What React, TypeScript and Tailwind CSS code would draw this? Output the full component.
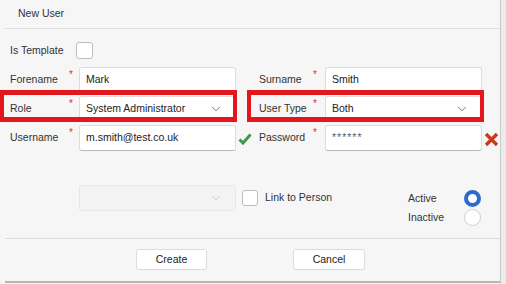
import { ChevronDown } from "lucide-react";

function Star({ mr }: { mr: string }) {
  return <span className={`ml-auto ${mr} mt-[3px] self-start text-[10px] leading-none text-[#e0303a]`}>*</span>;
}

function Field({ value, muted }: { value: string; muted?: boolean }) {
  return (
    <div className="flex h-full w-[157px] items-center rounded-[3px] border border-[#dcdcdc] border-b-[#b9b9b9] bg-white pl-[6px]">
      <span className={muted ? "text-[#5a6070] tracking-[1px]" : "text-[#222]"}>{value}</span>
    </div>
  );
}

function Select({ value, disabled }: { value?: string; disabled?: boolean }) {
  return (
    <div
      className={
        disabled
          ? "flex h-[26px] w-[157px] items-center rounded-[3px] border border-[#e6e6e6] bg-[#f3f3f3] pl-[6px] pr-[12px]"
          : "flex h-full w-[157px] items-center rounded-[3px] border border-[#dcdcdc] border-b-[#b9b9b9] bg-white pl-[6px] pr-[12px]"
      }
    >
      <span className="text-[#222]">{value}</span>
      <ChevronDown size={14} strokeWidth={1.4} className={disabled ? "ml-auto text-[#c8c8c8]" : "ml-auto text-[#555]"} />
    </div>
  );
}

function Check() {
  return (
    <svg width="14" height="12" viewBox="0 0 14 12">
      <polyline points="1.5,6.5 5,10 12.5,1.5" fill="none" stroke="#3d9a4b" strokeWidth="3" strokeLinejoin="miter" />
    </svg>
  );
}

function Cross() {
  return (
    <svg width="15" height="15" viewBox="0 0 15 15">
      <path d="M2 2 L13 13 M13 2 L2 13" stroke="#c63a22" strokeWidth="3.4" strokeLinecap="butt" />
    </svg>
  );
}

export default function App() {
  return (
    <div className="flex h-[284px] w-[506px] overflow-hidden bg-[#ebebeb] font-['Liberation_Sans',Arial,sans-serif] text-[10.5px] text-[#333]">
      <div className="relative flex w-[501px] flex-col border-r border-[#c9c9c9] bg-[#f6f6f6]">
        <div className="ml-[5px] flex h-[29px] items-center border-b border-[#dfdfdf] pl-[13px] text-[#333]">New User</div>

        <div className="flex h-[209px] flex-col pt-[13px]">
          <div className="flex h-[17px] items-center">
            <div className="w-[76px] pl-[10px]">Is Template</div>
            <div className="h-[17px] w-[17px] rounded-[3px] border border-[#bdbdbd] bg-white" />
          </div>

          <div className="mt-[8px] flex flex-col gap-[3px]">
            <div className="flex h-[26px]">
              <div className="flex w-[79px] items-center pl-[10px]">
                <span>Forename</span>
                <Star mr="mr-[6px]" />
              </div>
              <Field value="Mark" />
              <div className="w-[23px]" />
              <div className="flex w-[66px] items-center">
                <span>Surname</span>
                <Star mr="mr-[8px]" />
              </div>
              <Field value="Smith" />
            </div>

            <div className="flex h-[26px]">
              <div className="flex w-[79px] items-center pl-[10px]">
                <span>Role</span>
                <Star mr="mr-[6px]" />
              </div>
              <Select value="System Administrator" />
              <div className="w-[23px]" />
              <div className="flex w-[66px] items-center">
                <span>User Type</span>
                <Star mr="mr-[8px]" />
              </div>
              <Select value="Both" />
            </div>

            <div className="flex h-[26px]">
              <div className="flex w-[79px] items-center pl-[10px]">
                <span>Username</span>
                <Star mr="mr-[6px]" />
              </div>
              <Field value="m.smith@test.co.uk" />
              <div className="flex w-[23px] items-center pl-[2px] pt-[2px]">
                <Check />
              </div>
              <div className="flex w-[66px] items-center">
                <span>Password</span>
                <Star mr="mr-[8px]" />
              </div>
              <Field value="******" muted />
              <div className="flex items-center pl-[2px] pt-[3px]">
                <Cross />
              </div>
            </div>
          </div>

          <div className="mt-[34px] flex items-start">
            <div className="w-[79px]" />
            <Select disabled />
            <div className="ml-[6px] mt-[5px] h-[16px] w-[16px] rounded-[3px] border border-[#bdbdbd] bg-white" />
            <div className="ml-[7px] flex h-[26px] items-center">Link to Person</div>
            <div className="ml-auto mr-[19px] mt-[5px] flex flex-col gap-[2px]">
              <div className="flex h-[17px] items-center">
                <span className="w-[56px]">Active</span>
                <div className="h-[17px] w-[17px] rounded-full border-[4px] border-[#2b6bd0] bg-white" />
              </div>
              <div className="flex h-[17px] items-center">
                <span className="w-[56px]">Inactive</span>
                <div className="h-[17px] w-[17px] rounded-full border border-[#cfcfcf] bg-white" />
              </div>
            </div>
          </div>
        </div>

        <div className="ml-[5px] flex h-[45px] items-start gap-[86px] border-t border-b-2 border-t-[#dcdcdc] border-b-[#b5b5b5] pl-[131px] pt-[10px]">
          <button className="flex h-[21px] w-[71px] items-center justify-center rounded-[3px] border border-[#dcdcdc] bg-white text-[#222]">Create</button>
          <button className="flex h-[21px] w-[72px] items-center justify-center rounded-[3px] border border-[#dcdcdc] bg-white text-[#222]">Cancel</button>
        </div>

        <div className="pointer-events-none absolute left-0 top-[90px] h-[32px] w-[237px] border-[5px] border-x-[4px] border-[#e3161c]" />
        <div className="pointer-events-none absolute left-[247px] top-[90px] h-[32px] w-[237px] border-[5px] border-x-[4px] border-[#e3161c]" />
      </div>
    </div>
  );
}
